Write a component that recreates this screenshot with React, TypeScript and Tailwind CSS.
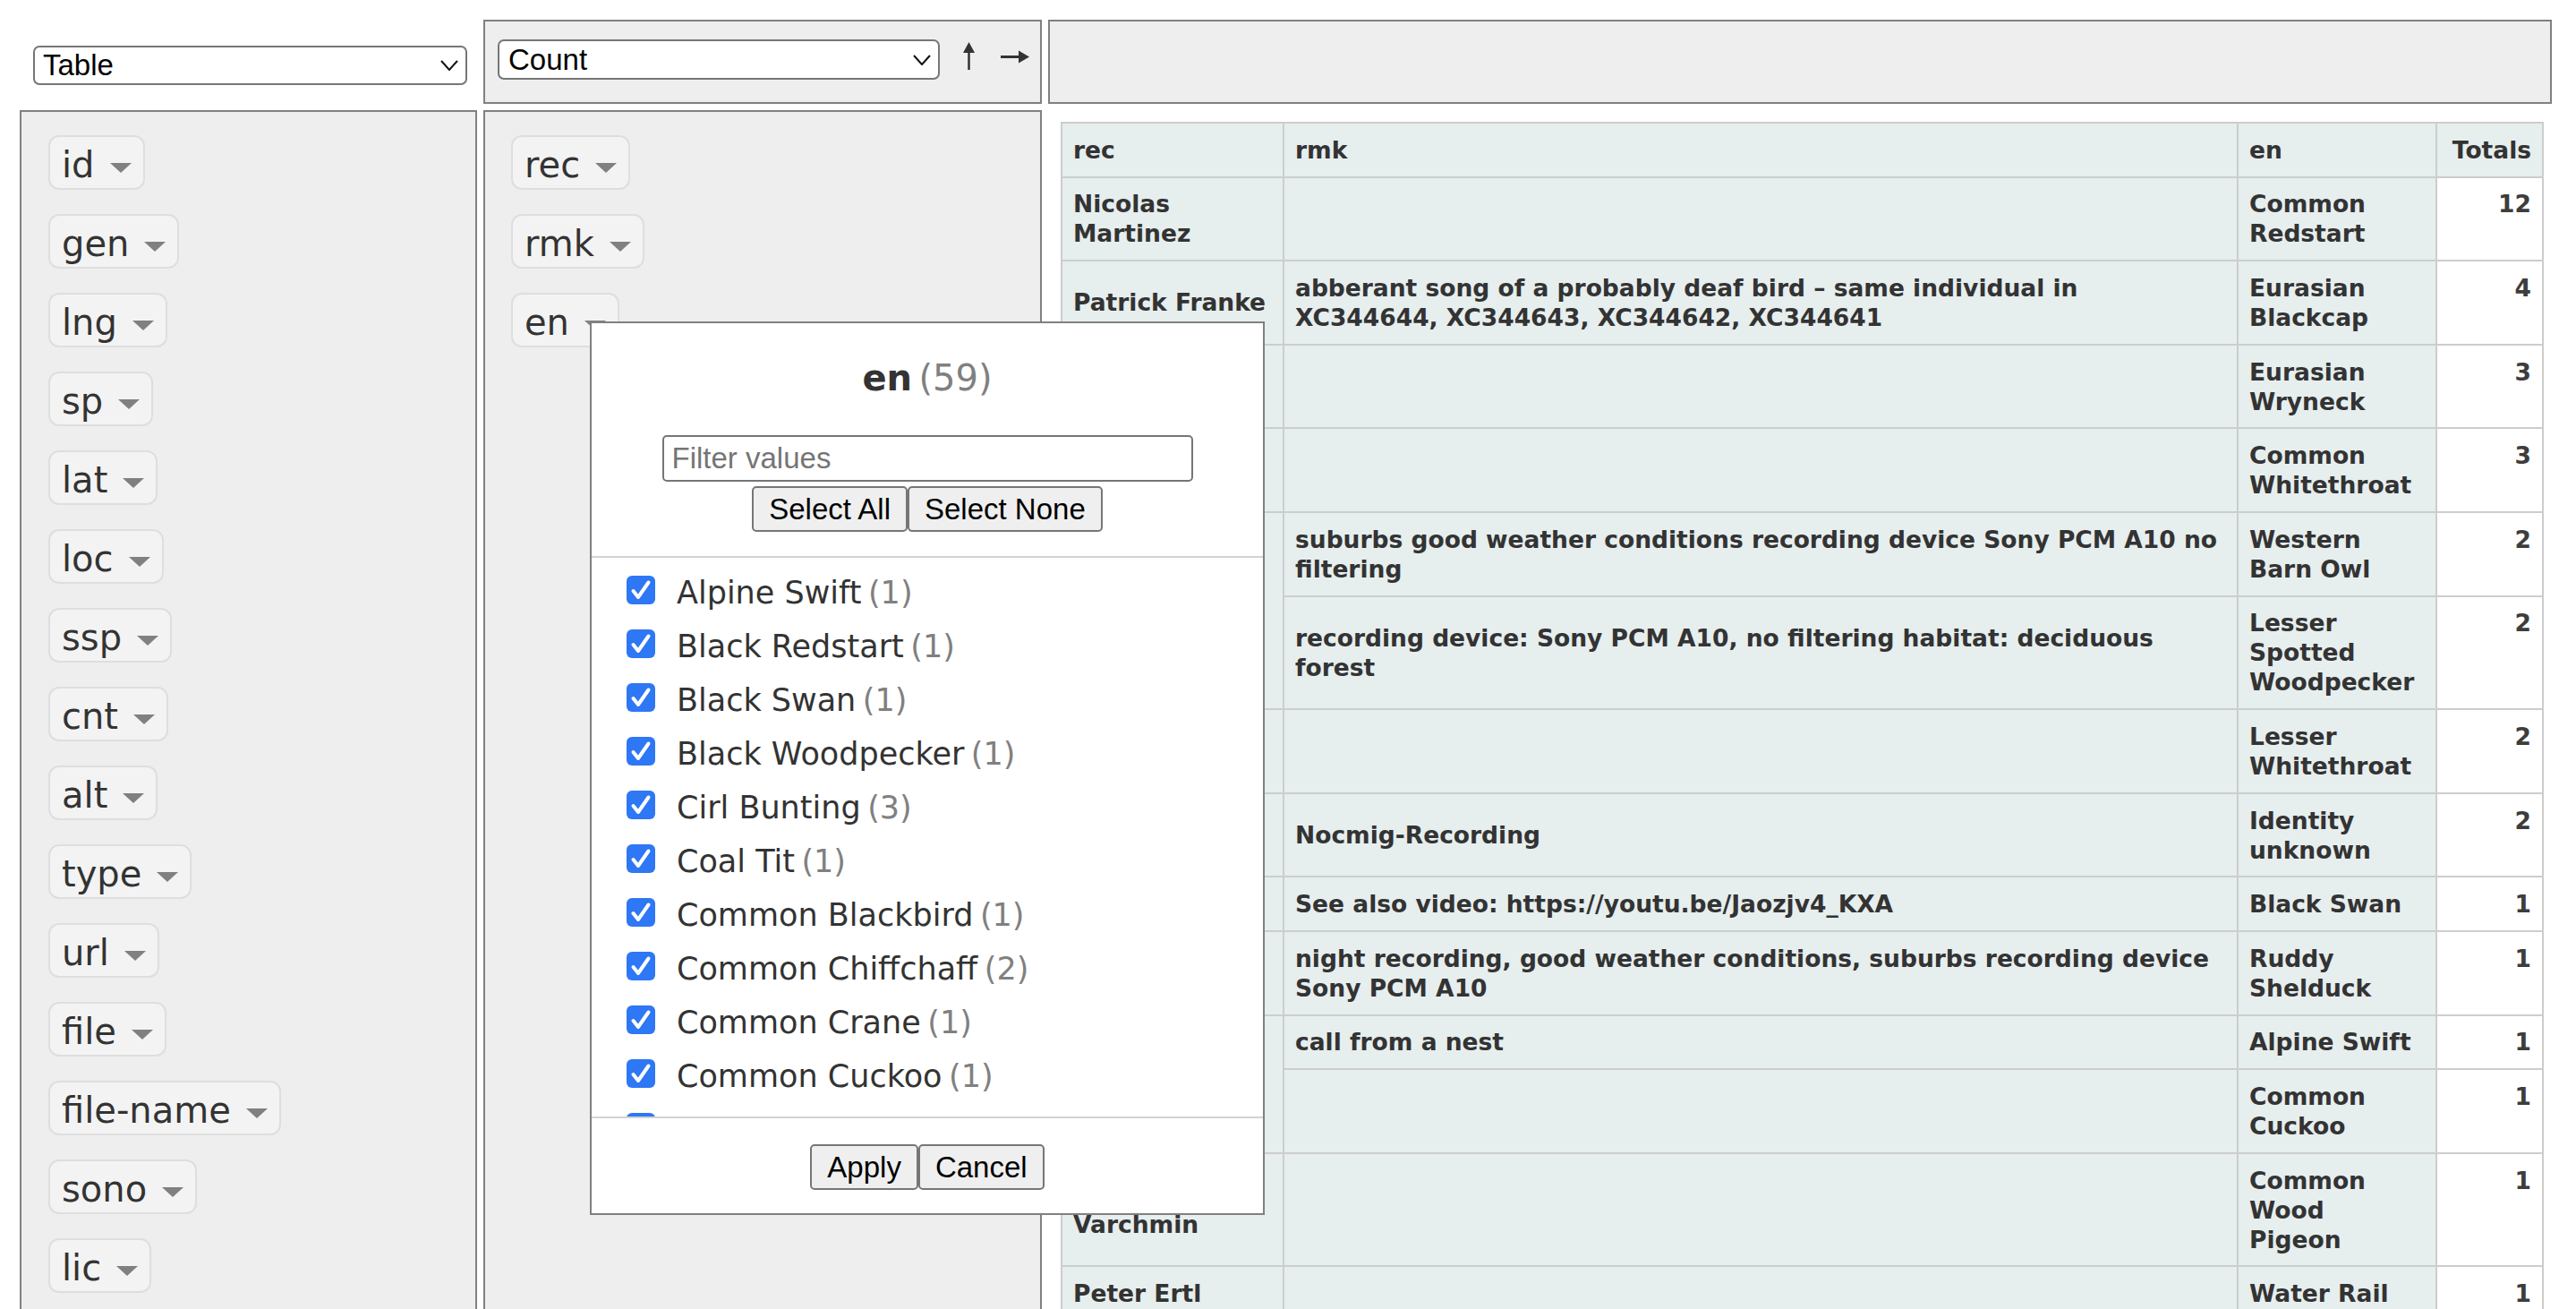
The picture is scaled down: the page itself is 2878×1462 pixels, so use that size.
import React from "react";

const unusedAttrs = ["id", "gen", "lng", "sp", "lat", "loc", "ssp", "cnt", "alt", "type", "url", "file", "file-name", "sono", "lic"];
const rowAttrs = ["rec", "rmk", "en"];

type Row = { rec?: string[]; span?: number; rmk: string[]; en: string[]; total: number };

const rows: Row[] = [
  { rec: ["Nicolas", "Martinez"], rmk: [], en: ["Common", "Redstart"], total: 12 },
  {
    rec: ["Patrick Franke"],
    rmk: ["abberant song of a probably deaf bird – same individual in", "XC344644, XC344643, XC344642, XC344641"],
    en: ["Eurasian", "Blackcap"],
    total: 4,
  },
  { rec: ["Ulf Elman"], rmk: [], en: ["Eurasian", "Wryneck"], total: 3 },
  { rec: ["Jan Hein"], rmk: [], en: ["Common", "Whitethroat"], total: 3 },
  {
    rec: ["Olaf Jahn"],
    span: 2,
    rmk: ["suburbs good weather conditions recording device Sony PCM A10 no", "filtering"],
    en: ["Western", "Barn Owl"],
    total: 2,
  },
  {
    rmk: ["recording device: Sony PCM A10, no filtering habitat: deciduous", "forest"],
    en: ["Lesser", "Spotted", "Woodpecker"],
    total: 2,
  },
  { rec: ["Tim Jahn"], rmk: [], en: ["Lesser", "Whitethroat"], total: 2 },
  { rec: ["Jens Kube"], rmk: ["Nocmig-Recording"], en: ["Identity", "unknown"], total: 2 },
  { rec: ["Ole Bo"], rmk: ["See also video: https://youtu.be/Jaozjv4_KXA"], en: ["Black Swan"], total: 1 },
  {
    rec: ["Max Heins"],
    rmk: ["night recording, good weather conditions, suburbs recording device", "Sony PCM A10"],
    en: ["Ruddy", "Shelduck"],
    total: 1,
  },
  { rec: ["Rob Lachlan"], span: 2, rmk: ["call from a nest"], en: ["Alpine Swift"], total: 1 },
  { rmk: [], en: ["Common", "Cuckoo"], total: 1 },
  { rec: ["Christoph", "Varchmin"], rmk: [], en: ["Common", "Wood", "Pigeon"], total: 1 },
  { rec: ["Peter Ertl"], rmk: [], en: ["Water Rail"], total: 1 },
];

const values: [string, number][] = [
  ["Alpine Swift", 1],
  ["Black Redstart", 1],
  ["Black Swan", 1],
  ["Black Woodpecker", 1],
  ["Cirl Bunting", 3],
  ["Coal Tit", 1],
  ["Common Blackbird", 1],
  ["Common Chiffchaff", 2],
  ["Common Crane", 1],
  ["Common Cuckoo", 1],
];

function Lines({ lines }: { lines: string[] }) {
  return (
    <>
      {lines.map((l, i) => (
        <React.Fragment key={i}>
          {i > 0 && <br />}
          {l}
        </React.Fragment>
      ))}
    </>
  );
}

function FakeSelect({ label, className }: { label: string; className: string }) {
  return (
    <div
      className={`flex items-center justify-between rounded-[7px] border-2 border-[#767676] bg-white pr-[8px] font-['Liberation_Sans',Arial,sans-serif] text-[33px] text-black ${className}`}
    >
      <span>{label}</span>
      <svg width="20" height="12" viewBox="0 0 20 12">
        <polyline points="1,1 10,11 19,1" fill="none" stroke="#111" strokeWidth="2" />
      </svg>
    </div>
  );
}

function Pill({ name }: { name: string }) {
  return (
    <span className="inline-flex h-[61px] items-start whitespace-nowrap rounded-[12px] border-2 border-[#dedede] bg-[#f3f3f3] px-[13px] pt-[8px] text-[40px] leading-[47px] text-[#333]">
      <span>{name}</span>
      <svg className="ml-[17px] mt-[21px]" width="24" height="11" viewBox="0 0 24 11">
        <path d="M0 0H24L12 11Z" fill="#808080" />
      </svg>
    </span>
  );
}

function Check() {
  return (
    <span className="ml-[39px] mt-[11px] flex h-[32px] w-[32px] shrink-0 items-center justify-center rounded-[6px] bg-[#2e77f5]">
      <svg width="32" height="32" viewBox="0 0 32 32">
        <path d="M7.5 17 L13 24 L24.5 7.5" fill="none" stroke="white" strokeWidth="4" strokeLinecap="round" strokeLinejoin="round" />
      </svg>
    </span>
  );
}

const btn =
  "h-[51px] rounded-[5px] border-2 border-[#767676] bg-[#efefef] px-[17px] font-['Liberation_Sans',Arial,sans-serif] text-[33px] leading-none text-black";

const th = "border-2 border-[#cdcdcd] bg-[#e6eeee] px-[12px] py-[12.8px] whitespace-nowrap align-middle text-[#333]";
const td = "border-2 border-[#cdcdcd] bg-white px-[12px] py-[12.8px] text-right align-top text-[#3d3d3d]";

export default function App() {
  return (
    <div className="relative h-[1462px] w-[2878px] overflow-hidden bg-white font-['DejaVu_Sans',Verdana,sans-serif] text-[#333]">
      <div className="grid grid-cols-[511px_624px_1680px] gap-[7px] pl-[22px] pt-[22px]">
        {/* renderer */}
        <div className="pl-[15px] pt-[29px]">
          <FakeSelect label="Table" className="h-[44px] w-[485px] pl-[9px]" />
        </div>

        {/* aggregator */}
        <div className="flex h-[94px] items-start border-2 border-[#808080] bg-[#eeeeee] pl-[14px] pt-[20px]">
          <FakeSelect label="Count" className="h-[45px] w-[494px] pl-[10px]" />
          <svg className="ml-[23px] mt-[3px]" width="19" height="31" viewBox="0 0 19 31">
            <line x1="9.5" y1="31" x2="9.5" y2="9" stroke="#333" strokeWidth="2.5" />
            <path d="M3 12 L9.5 0 L16 12 Z" fill="#333" />
          </svg>
          <svg className="ml-[26px] mt-[11px]" width="32" height="17" viewBox="0 0 32 17">
            <line x1="0" y1="8.5" x2="22" y2="8.5" stroke="#333" strokeWidth="3" />
            <path d="M20 1.5 L32 8.5 L20 15.5 Z" fill="#333" />
          </svg>
        </div>

        {/* cols */}
        <div className="h-[94px] border-2 border-[#808080] bg-[#eeeeee]" />

        {/* unused attributes */}
        <div className="flex flex-col items-start gap-[27px] border-2 border-[#808080] bg-[#eeeeee] pl-[30px] pt-[26px]">
          {unusedAttrs.map((a) => (
            <Pill key={a} name={a} />
          ))}
        </div>

        {/* row attributes */}
        <div className="flex flex-col items-start gap-[27px] border-2 border-[#808080] bg-[#eeeeee] pl-[29px] pt-[26px]">
          {rowAttrs.map((a) => (
            <Pill key={a} name={a} />
          ))}
        </div>

        {/* output */}
        <div className="pl-[14px] pt-[13px]">
          <table className="w-[1655px] table-fixed border-collapse text-left text-[26.5px] font-bold leading-[33px]">
            <colgroup>
              <col className="w-[248px]" />
              <col className="w-[1066px]" />
              <col className="w-[222px]" />
              <col className="w-[119px]" />
            </colgroup>
            <thead>
              <tr>
                <th className={th}>rec</th>
                <th className={th}>rmk</th>
                <th className={th}>en</th>
                <th className={`${th} text-right`}>Totals</th>
              </tr>
            </thead>
            <tbody>
              {rows.map((r, i) => (
                <tr key={i}>
                  {r.rec && (
                    <th className={th} rowSpan={r.span ?? 1}>
                      <Lines lines={r.rec} />
                    </th>
                  )}
                  <th className={th}>
                    <Lines lines={r.rmk} />
                  </th>
                  <th className={th}>
                    <Lines lines={r.en} />
                  </th>
                  <td className={td}>{r.total}</td>
                </tr>
              ))}
            </tbody>
          </table>
        </div>
      </div>

      {/* filter box for "en" */}
      <div className="absolute left-[659px] top-[359px] z-10 w-[754px] border-2 border-[#808080] bg-white text-center">
        <h4 className="mb-[40px] mt-[38px] text-[40px] leading-[47px] text-[#333]">
          <span className="font-bold">en</span>
          <span className="ml-[7.5px] text-[#808080]">(59)</span>
        </h4>
        <div className="flex flex-col items-center gap-[5px]">
          <input
            readOnly
            placeholder="Filter values"
            className="h-[52px] w-[593px] rounded-[5px] border-2 border-[#767676] bg-white px-[9px] font-['Liberation_Sans',Arial,sans-serif] text-[33px] text-black placeholder:text-[#757575]"
          />
          <div className="flex">
            <button type="button" className={btn}>
              Select All
            </button>
            <button type="button" className={btn}>
              Select None
            </button>
          </div>
        </div>
        <div className="mt-[27px] h-[628px] overflow-hidden border-y-2 border-[#d3d3d3] pt-[9px] text-left">
          {values.map(([name, n]) => (
            <div key={name} className="flex h-[60px] items-start">
              <Check />
              <span className="ml-[24px] whitespace-nowrap text-[35px] leading-[60px] text-[#333]">
                {name}
                <span className="ml-[7.5px] text-[#808080]">({n})</span>
              </span>
            </div>
          ))}
          {/* next entry, scrolled out of view apart from its box top */}
          <div className="flex h-[60px] items-start">
            <Check />
          </div>
        </div>
        <div className="flex justify-center pb-[26px] pt-[29px]">
          <button type="button" className={btn}>
            Apply
          </button>
          <button type="button" className={btn}>
            Cancel
          </button>
        </div>
      </div>
    </div>
  );
}
